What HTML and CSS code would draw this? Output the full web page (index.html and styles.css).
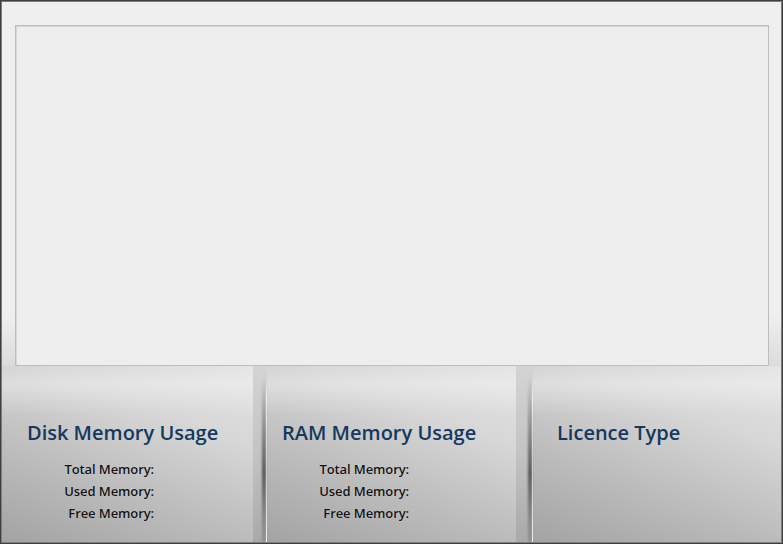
FILE: index.html
```html
<!DOCTYPE html>
<html>
<head>
<meta charset="utf-8">
<link rel="stylesheet" href="styles.css">
</head>
<body>
<div class="frame">
  <div class="viewer"></div>
  <div class="stats">
    <section class="panel panel-disk">
      <h2 class="title">Disk Memory Usage</h2>
      <ul class="rows">
        <li>Total Memory:</li>
        <li>Used Memory:</li>
        <li>Free Memory:</li>
      </ul>
    </section>
    <div class="divider"><span class="shade"></span><span class="hl"></span></div>
    <section class="panel panel-ram">
      <h2 class="title">RAM Memory Usage</h2>
      <ul class="rows">
        <li>Total Memory:</li>
        <li>Used Memory:</li>
        <li>Free Memory:</li>
      </ul>
    </section>
    <div class="divider divider-wide"><span class="shade"></span><span class="hl"></span></div>
    <section class="panel panel-licence">
      <h2 class="title">Licence Type</h2>
    </section>
  </div>
</div>
</body>
</html>
```

FILE: styles.css
```css
* { box-sizing: border-box; }
html, body { margin: 0; padding: 0; }
body {
  width: 783px;
  height: 544px;
  font-family: "Open Sans", "Liberation Sans", sans-serif;
  background: #efefef;
}
.frame {
  width: 783px;
  height: 544px;
  border: 1px solid #3f3f3f;
  box-shadow: inset 0 0 0 1px #7d7d7d;
  background: linear-gradient(to bottom, #efefef 0, #efefef 58%, #dadada 68%, #d9d9d9 100%);
  display: flex;
  flex-direction: column;
}
.viewer {
  margin: 24px 13px 0 14px;
  height: 341px;
  flex: none;
  background: #eeeeee;
  border: 1px solid #bdbdbd;
  box-shadow: inset 1px 1px 0 #d6d6d6, 0 1px 0 #f6f6f6;
}
.stats {
  flex: 1;
  display: flex;
  margin: 0 1px 1px 1px;
}
.panel {
  background:
    linear-gradient(to bottom, rgba(255,255,255,0) 0, rgba(255,255,255,0.3) 10%, rgba(255,255,255,0) 28%),
    linear-gradient(200deg, #e4e4e4 0%, #d7d7d7 30%, #bcbcbc 65%, #a3a3a3 100%);
  padding-top: 53px;
}
.panel-disk { width: 251px; padding-left: 25px; }
.panel-ram { width: 249px; padding-left: 15px; }
.panel-licence { flex: 1; padding-left: 24px; }
.divider {
  width: 14px;
  display: flex;
  justify-content: flex-end;
  padding-top: 12px;
  background: linear-gradient(to bottom, #d4d4d4, #c3c3c3 50%, #a9a9a9);
}
.divider-wide { width: 17px; }
.shade {
  width: 4px;
  background: linear-gradient(to bottom, rgba(90,90,90,0) 0, rgba(90,90,90,0.55) 30%, rgba(70,70,70,0.85) 58%, rgba(90,90,90,0.5) 85%, rgba(90,90,90,0.3) 100%);
  filter: blur(1px);
}
.hl {
  width: 1px;
  background: linear-gradient(to bottom, rgba(255,255,255,0) 0, rgba(255,255,255,0.9) 12%, #ffffff 100%);
}
.title {
  margin: 0;
  font-size: 20px;
  font-weight: 600;
  line-height: 28px;
  color: #15385e;
  letter-spacing: 0;
  white-space: nowrap;
}
.rows {
  list-style: none;
  margin: 11px 0 0 0;
  padding: 0;
  width: 127px;
  text-align: right;
}
.rows li {
  font-size: 13px;
  font-weight: 600;
  line-height: 22px;
  color: #111111;
  letter-spacing: -0.1px;
  text-shadow: 0 0 1px rgba(255,255,255,0.6);
}
```
